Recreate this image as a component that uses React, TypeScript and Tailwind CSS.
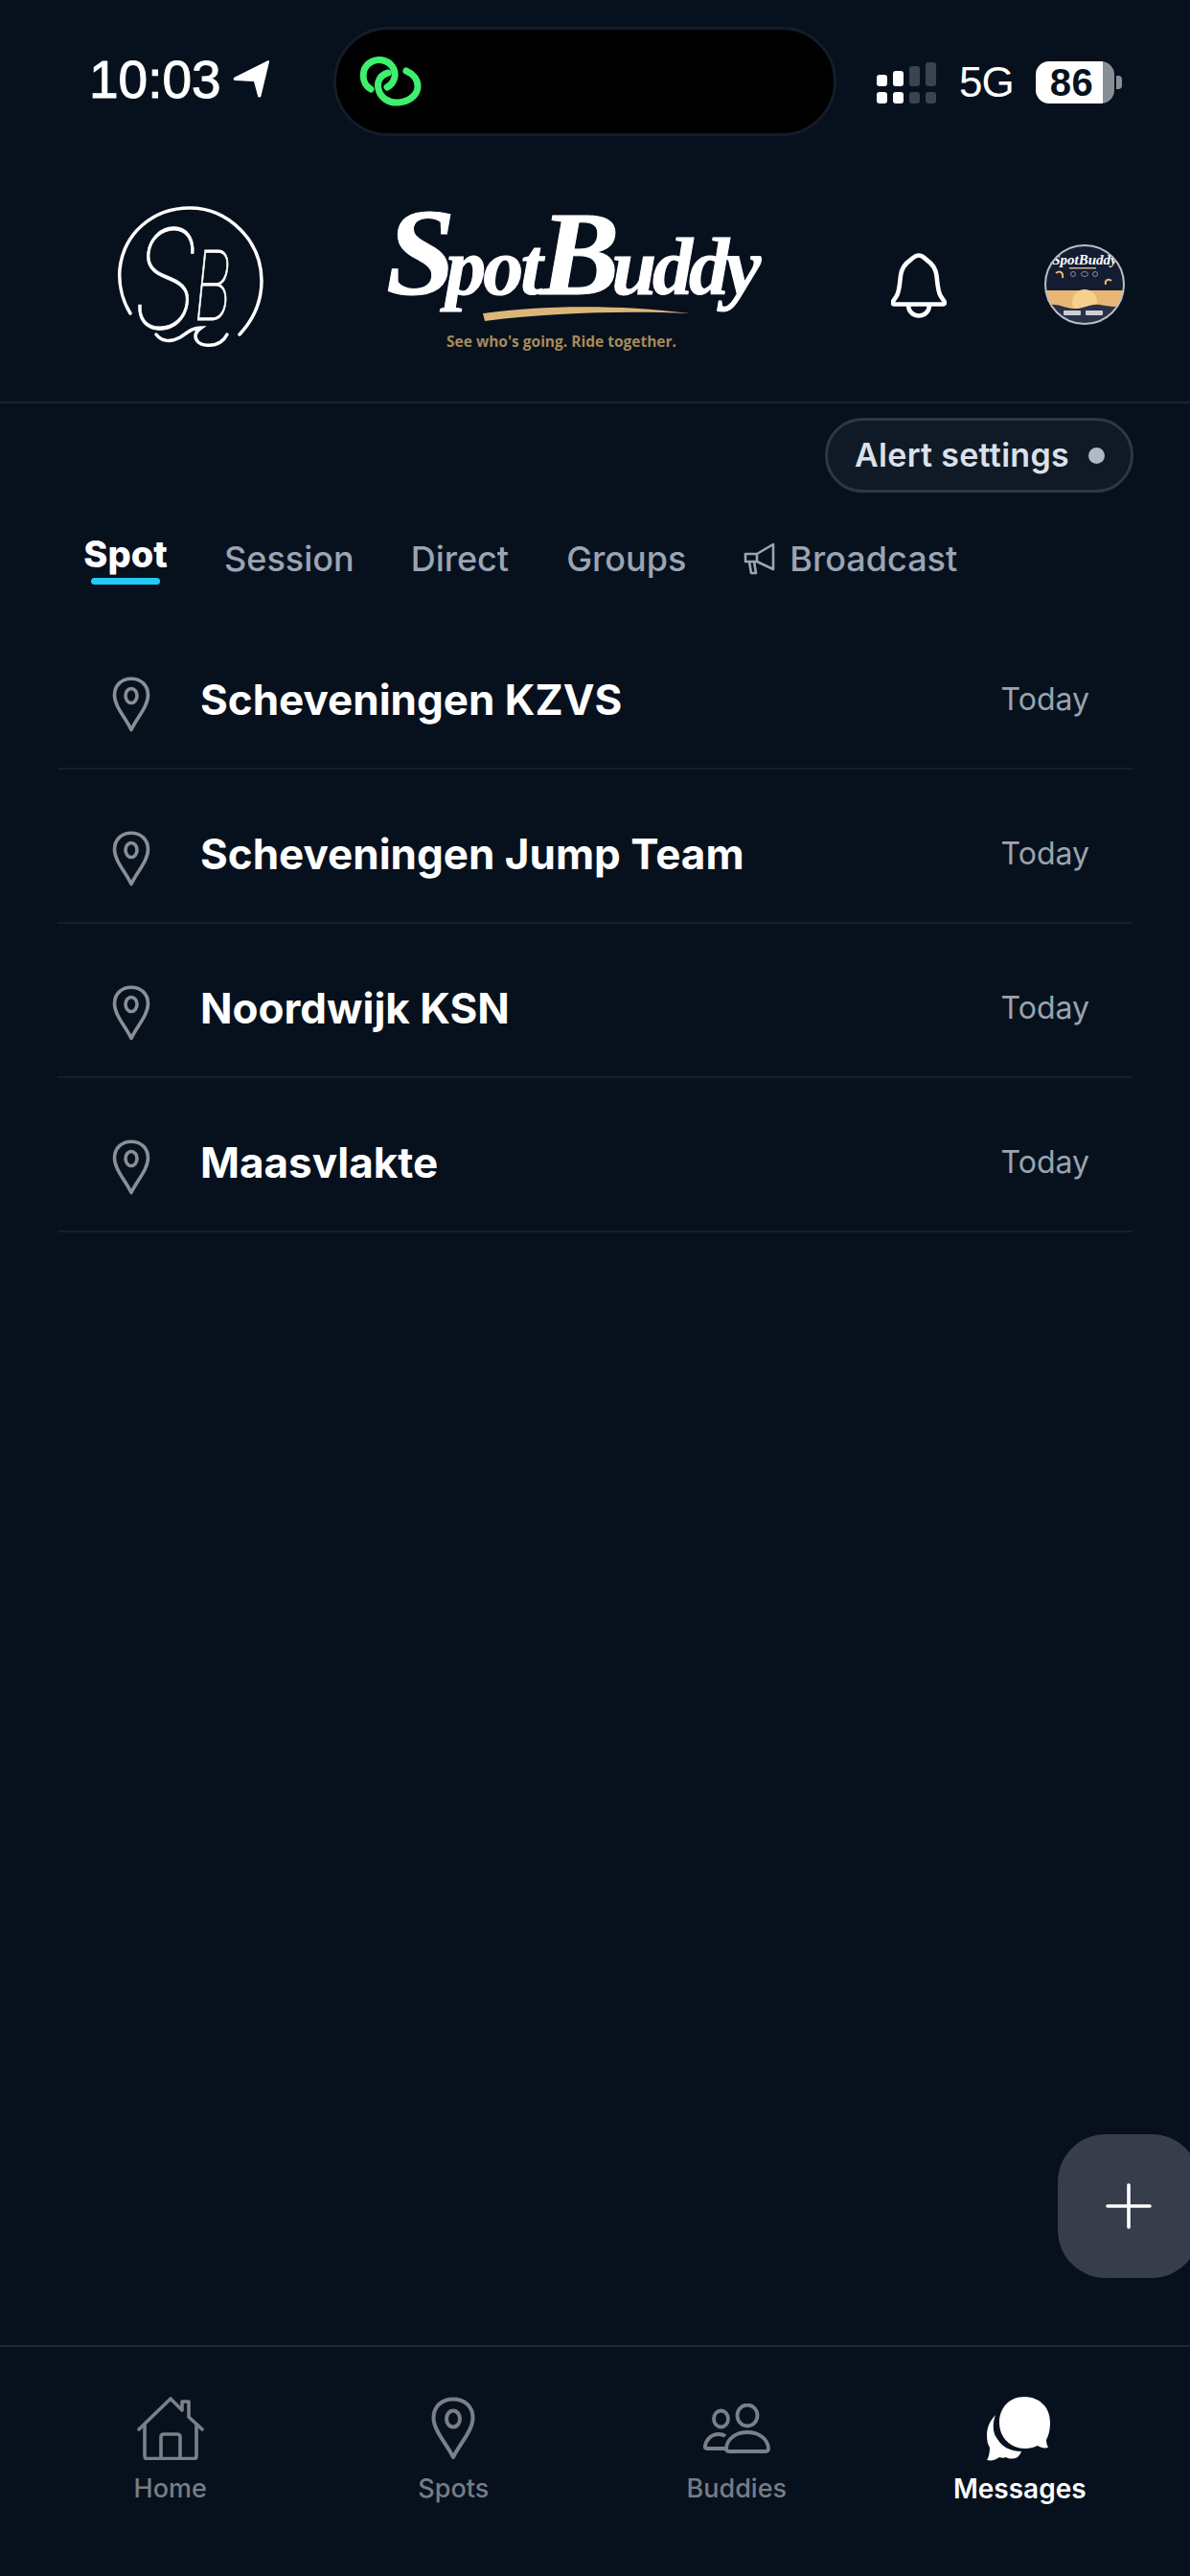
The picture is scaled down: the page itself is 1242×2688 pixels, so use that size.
import React from 'react';

const LINE = 'Inter, "Noto Sans", sans-serif';

const PinIcon = ({ className }: { className?: string }) => (
  <svg viewBox="0 0 40 58" className={className} fill="none" stroke="currentColor" strokeWidth={3.6} strokeLinejoin="round">
    <path d="M20 55.5C14 43 2.5 31 2.5 19.5 2.5 9 10 2.2 20 2.2S37.5 9 37.5 19.5C37.5 31 26 43 20 55.5Z" />
    <ellipse cx="20" cy="20" rx="6" ry="7.5" />
  </svg>
);

const NavPin = () => (
  <svg viewBox="0 0 46 66" className="w-[46px] h-[66px] text-[#7b8088]" fill="none" stroke="currentColor" strokeWidth={4} strokeLinejoin="round">
    <path d="M23 63C16 49 2.5 35 2.5 22 2.5 10 11 2.5 23 2.5S43.500 10 43.500 22C43.500 35 30 49 23 63Z" />
    <ellipse cx="23" cy="23" rx="7" ry="8.500" />
  </svg>
);

const HomeIcon = () => (
  <svg viewBox="0 0 70 66" className="w-[70px] h-[66px] text-[#7b8088]" fill="none" stroke="currentColor" strokeWidth={3.6} strokeLinejoin="round" strokeLinecap="round">
    <path d="M2 34 35 2l12 12V5h7v16l14 13" />
    <path d="M8 29v33c0 1.500 1 2.500 2.500 2.500h49c1.500 0 2.500-1 2.500-2.500V29" />
    <path d="M25 64V42c0-2 1-3 3-3h14c2 0 3 1 3 3v22" />
  </svg>
);

const BuddiesIcon = () => (
  <svg viewBox="0 0 70 52" className="w-[70px] h-[52px] text-[#7b8088]" fill="none" stroke="currentColor" strokeWidth={3.8} strokeLinejoin="round">
    <ellipse cx="18.500" cy="16" rx="7.500" ry="8.500" />
    <ellipse cx="46" cy="12.500" rx="10.500" ry="11" />
    <path d="M24 47H4c-2 0-2.500-1-2-3 1-6 6-12 14-12 2.500 0 5 .5 7 2" />
    <path d="M27 50c-2 0-3-1-3-3 .5-10 10-17 22-17s21.500 7 22 17c0 2-1 3-3 3Z" />
  </svg>
);

const MessagesIcon = () => (
  <svg viewBox="0 0 68 68" className="w-[68px] h-[68px] text-white" fill="currentColor">
    <path d="M39 1C52 1 66 9 66 28c0 9-2 14-4 18 0 3 1 6 2 8-4 1-8 0-11-2-4 2-9 3-13 3-15 0-27-11-27-27C13 12 24 1 39 1Z" />
    <path d="M9 20c-5 5-9 12-9 21 0 6 1 10 3 13 0 5-1 10-3 13 5 1 9 0 13-3 2 1 5 1 7 0 3 2 8 2 12 0 1-1 3-3 4-6-12 0-21-5-27-16C6 37 6 27 9 20Z" />
  </svg>
);

const SignalBars = () => {
  const cols = [
    { h: 'h-[12px]', c: 'bg-white' },
    { h: 'h-[16px]', c: 'bg-white' },
    { h: 'h-[21px]', c: 'bg-[#3a4350]' },
    { h: 'h-[25px]', c: 'bg-[#3a4350]' },
  ];
  return (
    <div className="flex gap-[6px] items-end w-[63px]">
      {cols.map((col, i) => (
        <div key={i} className="flex flex-col gap-[6px] w-[11px]">
          <div className={`${col.h} ${col.c} rounded-[3px]`} />
          <div className={`h-[12px] ${col.c} rounded-[3px]`} />
        </div>
      ))}
    </div>
  );
};

const StatusBar = () => (
  <div className="flex items-center h-[114px] mt-[28px] shrink-0">
    <div className="w-[348px] pl-[93px] flex items-center">
      <span className="text-[55px] leading-none text-white mt-[-3px] [-webkit-text-stroke:1px_white]" style={{ fontFamily: '"Liberation Sans", sans-serif' }}>10:03</span>
      <svg viewBox="0 0 40 40" className="w-[40px] h-[40px] ml-[12px] mt-[-4px]" fill="white">
        <path d="M38 1.500 29.500 37c-.5 2-3 2-3.500 0l-4-15L2.500 21c-2 0-2.500-2.500-.5-3.500L36 .5c1.500-.7 2.500 0 2 1Z" />
      </svg>
    </div>
    <div className="w-[525px] h-[114px] bg-black rounded-[57px] border-[3px] border-[#131c28] flex items-center pl-[24px] shrink-0">
      <svg viewBox="0 0 66 52" className="w-[66px] h-[52px]" fill="none" stroke="#3ef06e" strokeWidth={7}>
        <path d="M12 34C5 30 3 22 5 14 8 6 17 2 25 4c8 2 13 9 12 17-1 5-4 9-8 11" strokeLinecap="round" />
        <path d="M30 17c-8 2-12 9-10 17 2 9 11 15 21 14 10-1 20-7 20-17 0-7-5-13-12-16" strokeLinecap="round" />
      </svg>
    </div>
    <div className="flex items-center pl-[42px] mt-[2px]">
      <SignalBars />
      <span className="text-[44px] leading-none text-white ml-[23px] tracking-[-1px]" style={{ fontFamily: '"Liberation Sans", sans-serif' }}>5G</span>
      <div className="flex items-center ml-[23px]">
        <div className="w-[82px] h-[44px] rounded-[14px] bg-[linear-gradient(to_right,#ffffff_85%,#8a8f96_85%)] flex items-center pl-[15px]">
          <span className="text-[40px] font-bold leading-none text-[#07111e] tracking-[0.5px]" style={{ fontFamily: '"Liberation Sans", sans-serif' }}>86</span>
        </div>
        <div className="w-[6px] h-[14px] ml-[2px] rounded-r-[4px] bg-[#8a8f96]" />
      </div>
    </div>
  </div>
);

const SbLogo = () => (
  <svg viewBox="0 0 154 150" className="w-[154px] h-[150px] shrink-0 overflow-visible" fill="none" stroke="white" strokeWidth={3.5} strokeLinecap="round">
    <path d="M14 112C4 96 2 78 3 66 7 28 38 2 76 2c40 0 75 34 75 76 0 20-8 40-23 56" />
    <path d="M41 134c6 8 16 8 25 3 8-5 12-10 22-10-6 4-8 9-4 14 4 5 16 6 24 1 3-2 5-4 7-8" />
    <g fill="white" stroke="white" strokeWidth={0.8} style={{ fontFamily: 'Inter, sans-serif' }} fontWeight="100" fontStyle="italic">
      <text x="0" y="0" fontSize="144" transform="translate(16 128) scale(0.78 1)">S</text>
      <text x="0" y="0" fontSize="100" transform="translate(80 119) scale(0.62 1)">B</text>
    </g>
  </svg>
);

const BrandLogo = () => (
  <div className="relative w-[400px] h-[150px] ml-[131px] shrink-0">
    <div className="absolute left-[-4px] top-[-17px] flex items-baseline italic font-bold text-white whitespace-nowrap leading-none tracking-[-3px] [-webkit-text-stroke:1px_white]" style={{ fontFamily: '"Liberation Serif", serif' }}>
      <span className="text-[130px] tracking-[-10px]">S</span>
      <span className="text-[84px]">pot</span>
      <span className="text-[124px] tracking-[-8px]">B</span>
      <span className="text-[84px] tracking-[-4px]">uddy</span>
    </div>
    <svg viewBox="0 0 216 18" className="absolute left-[97px] top-[102px] w-[216px] h-[18px]">
      <path d="M0 10C50 3 130-1 216 10 150 7 70 9 2 18Z" fill="#dcb679" />
    </svg>
    <span className="absolute left-[59px] top-[134px] text-[15.500px] leading-none font-bold text-[#a98a58] whitespace-nowrap" style={{ fontFamily: '"Open Sans", sans-serif' }}>See who's going. Ride together.</span>
  </div>
);

const Avatar = () => (
  <svg viewBox="0 0 84 84" className="w-[84px] h-[84px] ml-[102px] mt-[40px] shrink-0">
    <defs>
      <clipPath id="avatarClip"><circle cx="42" cy="42" r="41" /></clipPath>
    </defs>
    <g clipPath="url(#avatarClip)">
      <rect width="84" height="84" fill="#131c33" />
      <rect y="48" width="84" height="20" fill="#eab673" />
      <circle cx="42" cy="60" r="13" fill="#f7d08f" />
      <path d="M0 64c12-4 20 2 30 3s18-6 28-4 18 3 26 0v21H0Z" fill="#2a3048" />
      <path d="M12 30c4-3 8-1 7 5M70 38c-4-3-7 0-6 4" stroke="#eab673" strokeWidth="2" fill="none" />
      <circle cx="30" cy="31" r="2.500" fill="none" stroke="#8a8f96" />
      <ellipse cx="42" cy="31" rx="3.500" ry="2.500" fill="none" stroke="#8a8f96" />
      <circle cx="53" cy="31" r="2.500" fill="none" stroke="#8a8f96" />
      <rect x="20" y="69" width="18" height="5" rx="1" fill="#ccd0d6" />
      <rect x="43" y="69" width="18" height="5" rx="1" fill="#ccd0d6" />
      <rect x="26" y="24" width="28" height="1.500" fill="#dcb679" />
      <text x="42" y="21" textAnchor="middle" fontSize="15" fontStyle="italic" fontWeight="700" fill="white" style={{ fontFamily: '"Liberation Serif", serif' }}>SpotBuddy</text>
    </g>
    <circle cx="42" cy="42" r="41" fill="none" stroke="#b9bec6" strokeWidth="2" />
  </svg>
);

const Header = () => (
  <div className="h-[279px] shrink-0 border-b-[2px] border-[#1a2431] flex items-start pt-[73px] pl-[122px]">
    <SbLogo />
    <BrandLogo />
    <svg viewBox="0 0 58 68" className="w-[58px] h-[68px] ml-[123px] mt-[49px] shrink-0" fill="none" stroke="white" strokeWidth={4.600} strokeLinejoin="round" strokeLinecap="round">
      <path d="M29 2.500c4 0 6 3 8.500 5 6 4 9 9 10 16 1 8 1 15 4 21l4 6c1 2 0 3-2 3H4c-2 0-3-1-2-3l4-6c3-6 3-13 4-21 1-7 4-12 10-16 2.500-2 5-5 9-5Z" />
      <path d="M18 54c0 7 5 11.500 11 11.500S40 61 40 54" />
    </svg>
    <Avatar />
  </div>
);

const Tabs = () => (
  <div className="flex items-start pl-[88px] mt-[51px] h-[77px] text-[36px] leading-none font-medium text-[#9aa5b4] shrink-0">
    <div className="flex flex-col items-center w-[86px]">
      <span className="text-[38px] font-extrabold text-white mt-[-6px]">Spot</span>
      <div className="w-[72px] h-[7px] rounded-full bg-[#25c9f5] mt-[6px]" />
    </div>
    <span className="ml-[60px]">Session</span>
    <span className="ml-[59px]">Direct</span>
    <span className="ml-[60px]">Groups</span>
    <span className="ml-[60px] flex items-center">
      <svg viewBox="0 0 34 34" className="w-[34px] h-[34px] mr-[14px]" fill="none" stroke="currentColor" strokeWidth={2.6} strokeLinejoin="round">
        <path d="M2 12h12L31 2v26L14 20H2Z" />
        <path d="M6 20l2 12h5l-2-12" />
        <path d="M14 12v8" />
      </svg>
      Broadcast
    </span>
  </div>
);

const rows = ['Scheveningen KZVS', 'Scheveningen Jump Team', 'Noordwijk KSN', 'Maasvlakte'];

const NavItem = ({ label, icon, active }: { label: string; icon: React.ReactNode; active?: boolean }) => (
  <div className="flex flex-col items-center">
    <div className="h-[66px] flex items-center justify-center">{icon}</div>
    <span className={`mt-[13px] leading-[34px] ${active ? 'text-[28px] font-semibold text-white' : 'text-[27px] font-medium text-[#777c84]'}`}>{label}</span>
  </div>
);

export default function App() {
  return (
    <div className="relative flex flex-col h-[2688px] w-[1242px] overflow-hidden bg-[#07111e]" style={{ fontFamily: LINE }}>
      <StatusBar />
      <Header />

      <div className="flex justify-end pr-[59px] mt-[15px] shrink-0">
        <button className="flex items-center h-[78px] w-[322px] pl-[28px] rounded-full border-[3px] border-[#2a384b] bg-[#101a26]">
          <span className="text-[34px] tracking-[0.3px] font-semibold text-[#dbe1ea] leading-none">Alert settings</span>
          <span className="w-[17px] h-[17px] rounded-full bg-[#b0b8c4] ml-[20px]" />
        </button>
      </div>

      <Tabs />

      <div className="flex flex-col mx-[60px] shrink-0">
        {rows.map((name) => (
          <div key={name} className="flex items-center h-[161px] pt-[17px] pl-[57px] pr-[45px] border-b-[2px] border-[#151f2c]">
            <PinIcon className="w-[40px] h-[58px] text-[#8b8f95] shrink-0 mt-[10px]" />
            <span className="ml-[52px] flex-1 text-[44px] font-bold text-white leading-none">{name}</span>
            <span className="text-[32px] text-[#9aa3ad] leading-none">Today</span>
          </div>
        ))}
      </div>

      {/* bottom nav */}
      <div className="mt-auto h-[241px] shrink-0 border-t-[2px] border-[#1f2937] grid grid-cols-4 px-[30px] pt-[52px]">
        <NavItem label="Home" icon={<HomeIcon />} />
        <NavItem label="Spots" icon={<NavPin />} />
        <NavItem label="Buddies" icon={<BuddiesIcon />} />
        <NavItem label="Messages" icon={<MessagesIcon />} active />
      </div>

      <button className="absolute right-[-10px] top-[2227px] w-[148px] h-[150px] rounded-[50px] bg-[#383d4c] flex items-center justify-center">
        <svg viewBox="0 0 48 48" className="w-[48px] h-[48px]" stroke="white" strokeWidth={3.600} strokeLinecap="round">
          <path d="M24 2v44M2 24h44" />
        </svg>
      </button>
    </div>
  );
}
